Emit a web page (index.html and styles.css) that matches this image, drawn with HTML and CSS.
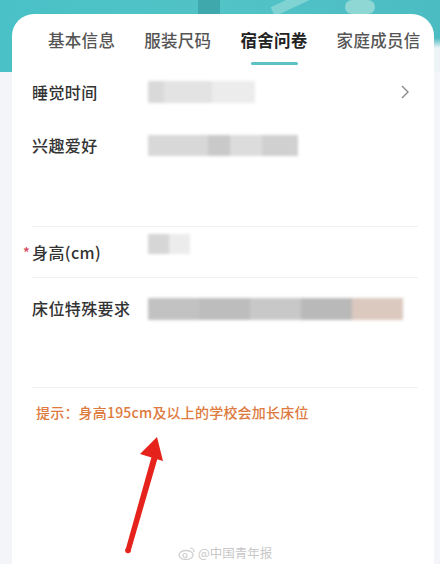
FILE: index.html
```html
<!DOCTYPE html>
<html lang="zh">
<head>
<meta charset="utf-8">
<link rel="stylesheet" href="styles.css">
</head>
<body>
<div class="page">
  <div class="hero">
    <div class="shape s1"></div>
    <div class="shape s2"></div>
    <div class="shape s3"></div>
  </div>
  <div class="card">
    <nav class="tabs">
      <span class="tab">基本信息</span>
      <span class="tab">服装尺码</span>
      <span class="tab active">宿舍问卷</span>
      <span class="tab">家庭成员信</span>
    </nav>
    <div class="form">
      <div class="row r1">
        <span class="label">睡觉时间</span>
        <span class="blur b1"></span>
        <svg class="chev" width="10" height="16" viewBox="0 0 10 16"><path d="M2 2 L8 8 L2 14" fill="none" stroke="#8a8a8a" stroke-width="1.4"/></svg>
      </div>
      <div class="row r2 tall">
        <span class="label">兴趣爱好</span>
        <span class="blur b2"></span>
      </div>
      <div class="row r3">
        <span class="label req">身高(cm)</span>
        <span class="blur b3"></span>
      </div>
      <div class="row r4 tall">
        <span class="label">床位特殊要求</span>
        <span class="blur b4"></span>
      </div>
      <p class="tip">提示：身高195cm及以上的学校会加长床位</p>
    </div>
  </div>
  <svg class="arrow" width="440" height="564" viewBox="0 0 440 564">
    <path d="M125.5 550 L151.5 457 L157.5 458.5 L130.5 551.5 Z" fill="#e5221b"/>
    <circle cx="128" cy="550.5" r="2.8" fill="#e5221b"/>
    <path d="M157 437 L163 461 L140 454 Z" fill="#e5221b"/>
  </svg>
  <div class="mark">
    <svg width="18" height="14" viewBox="0 0 18 14"><ellipse cx="8" cy="9" rx="7" ry="4.5" fill="none" stroke="#cfcfcf" stroke-width="1.3"/><circle cx="7" cy="9.5" r="2" fill="none" stroke="#cfcfcf" stroke-width="1.2"/><path d="M12 2 Q16 2 16 6" fill="none" stroke="#cfcfcf" stroke-width="1.2"/></svg>
    <span>@中国青年报</span>
  </div>
</div>
</body>
</html>
```
FILE: styles.css
```css
* { box-sizing: border-box; }
html, body { margin: 0; padding: 0; }
body {
  width: 440px;
  height: 564px;
  overflow: hidden;
  background: #f4f5f9;
  font-family: "Noto Sans CJK SC", "Noto Sans", sans-serif;
}
.page { position: relative; width: 440px; height: 564px; }
.hero {
  position: relative;
  height: 72px;
  background:
    linear-gradient(180deg, rgba(244,245,249,0) 0 38px, #eef4f6 48px) right / 12px 100% no-repeat,
    linear-gradient(90deg, #49c1c6 0%, #52c3c7 50%, #4cbcc3 100%);
  overflow: hidden;
}
.shape { position: absolute; }
.s1 { left: 198px; top: 0; width: 22px; height: 16px; background: #3ea8ac; }
.s2 { left: 270px; top: -6px; width: 60px; height: 10px; background: #7fd3d3; transform: rotate(-25deg); }
.s3 { left: 345px; top: 0; width: 30px; height: 14px; background: #8fd7d4; border-radius: 8px; }
.card {
  position: relative;
  margin: -58px 6px 0 12px;
  height: 560px;
  background: #fff;
  border-radius: 22px 22px 0 0;
}
.tabs {
  display: flex;
  gap: 29px;
  padding: 14px 0 0 36px;
  height: 54px;
  white-space: nowrap;
  overflow: hidden;
}
.tab {
  position: relative;
  font-size: 16.5px;
  line-height: 24px;
  color: #555;
  font-weight: 500;
  letter-spacing: 0.3px;
}
.tab.active { color: #222; font-weight: 700; }
.tab.active::after {
  content: "";
  position: absolute;
  left: 11px;
  right: 10px;
  top: 34px;
  height: 3px;
  border-radius: 2px;
  background: #5cc0c4;
}
.form { padding: 0 16px 0 20px; }
.row {
  position: relative;
  display: flex;
  align-items: center;
  height: 48px;
  border-bottom: 1px solid #f1f1f3;
}
.row.r1 { border-bottom: none; }
.row.tall { align-items: flex-start; padding-top: 17px; }
.row.r2 { height: 111px; }
.row.r3 { height: 51px; }
.row.r4 { height: 110px; padding-top: 18px; }
.label {
  width: 116px;
  flex: none;
  font-size: 16px;
  line-height: 24px;
  color: #333;
  font-weight: 500;
  letter-spacing: 0.4px;
}
.label.req::before {
  content: "*";
  position: absolute;
  left: -9px;
  color: #d9475a;
  font-size: 14px;
}
.blur {
  display: block;
  filter: blur(1.5px);
}
.b1 {
  width: 107px; height: 22px;
  background: linear-gradient(90deg, #d9d9d9 0 15%, #e3e3e3 15% 60%, #ececec 60% 100%);
}
.b2 {
  width: 150px; height: 21px; margin-top: 2px;
  background: linear-gradient(90deg, #d8d8d8 0 40%, #c9c9c9 40% 55%, #dcdcdc 55% 76%, #d0d0d0 76% 100%);
}
.b3 {
  width: 42px; height: 20px; margin-top: -16px;
  background: linear-gradient(90deg, #d6d6d6 0 50%, #ececec 50% 100%);
}
.b4 {
  width: 255px; height: 22px; margin-top: 2px;
  background: linear-gradient(90deg, #c2c2c2 0 20%, #bdbdbd 20% 40%, #c8c8c8 40% 60%, #b9b9b9 60% 80%, #dbc9bf 80% 100%);
}
.chev { position: absolute; right: 8px; top: 16px; }
.tip {
  margin: 0;
  padding: 13px 0 0 4px;
  font-size: 14px;
  line-height: 22px;
  color: #dd7a3e;
  font-weight: 500;
  letter-spacing: 0.2px;
}
.arrow { position: absolute; left: 0; top: 0; pointer-events: none; }
.mark {
  position: absolute;
  left: 178px;
  top: 543px;
  display: flex;
  align-items: center;
  gap: 2px;
  font-size: 12.5px;
  color: #c8c8c8;
}
```
